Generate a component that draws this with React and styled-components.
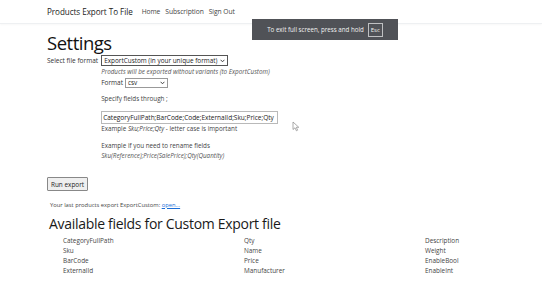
import React from "react";
import styled, { createGlobalStyle } from "styled-components";

const GlobalStyle = createGlobalStyle`
  html, body {
    margin: 0;
    padding: 0;
    background: #fff;
    font-family: "Open Sans", "Noto Sans", sans-serif;
    color: #212529;
  }
`;

const Page = styled.div`
  position: relative;
  width: 542px;
  height: 305px;
  overflow: hidden;
`;

const NavBar = styled.div`
  display: flex;
  align-items: center;
  height: 23px;
  padding-left: 47px;
  border-bottom: 1px solid #eef0f2;
  box-shadow: 0 1px 2px rgba(0, 0, 0, 0.03);
`;

const Brand = styled.span`
  font-size: 8.1px;
  letter-spacing: -0.05px;
  color: #222;
  margin-right: 9px;
`;

const NavLink = styled.span`
  font-size: 6.7px;
  letter-spacing: -0.05px;
  color: #444;
  margin-right: 5px;
`;

const Toast = styled.div`
  position: absolute;
  left: 252px;
  top: 19px;
  width: 146px;
  height: 21px;
  background: #505257;
  color: #f2f2f2;
  display: flex;
  align-items: center;
  justify-content: center;
  gap: 4px;
  font-size: 6.2px;
`;

const Key = styled.span`
  border: 1px solid #bfc0c2;
  padding: 2px 2px;
  font-size: 6px;
  line-height: 8px;
`;

const Main = styled.div`
  padding-left: 47px;
`;

const Title = styled.h1`
  margin: 7px 0 0;
  font-size: 18.5px;
  letter-spacing: -0.5px;
  font-weight: 400;
  line-height: 24px;
  color: #111;
`;

const Row = styled.div`
  display: flex;
  align-items: flex-start;
  gap: 3px;
`;

const Label = styled.span`
  font-size: 6.5px;
  color: #333;
  line-height: 11px;
  white-space: nowrap;
`;

const Column = styled.div`
  display: flex;
  flex-direction: column;
`;

const Select = styled.div`
  display: flex;
  align-items: center;
  justify-content: space-between;
  width: ${(p) => p.w}px;
  height: ${(p) => p.h || 10}px;
  box-sizing: border-box;
  border: 1px solid ${(p) => p.border || "#555"};
  padding: 0 2px 0 2px;
  font-size: 6.4px;
  white-space: nowrap;
  color: #222;
  background: #fff;
`;

const Hint = styled.div`
  font-size: 6.3px;
  line-height: 10px;
  white-space: nowrap;
  color: ${(p) => p.color || "#555"};
  font-style: ${(p) => (p.italic ? "italic" : "normal")};
  margin-top: ${(p) => p.mt || 0}px;
`;

const Inline = styled.div`
  display: flex;
  align-items: center;
  gap: 2px;
`;

const TextField = styled.div`
  width: 177px;
  height: 13px;
  box-sizing: border-box;
  border: 1px solid #b9b9b9;
  display: flex;
  align-items: center;
  padding: 0 1px;
  font-size: 6.5px;
  white-space: nowrap;
  color: #222;
  margin-top: 7px;
`;

const Button = styled.div`
  display: inline-flex;
  align-items: center;
  margin-top: 16px;
  height: 12px;
  padding: 0 3px;
  border: 1px solid #888;
  background: #efefef;
  font-size: 6.4px;
  color: #222;
  border-radius: 1px;
`;

const LastExport = styled.div`
  margin: 9px 0 0 3px;
  font-size: 5.8px;
  color: #444;

  a {
    color: #1a6ed8;
    text-decoration: underline;
  }
`;

const SubTitle = styled.h2`
  margin: 6px 0 0 2px;
  font-size: 14px;
  letter-spacing: -0.3px;
  font-weight: 400;
  line-height: 18px;
  color: #1a1a1a;
`;

const FieldGrid = styled.div`
  display: grid;
  grid-template-columns: 181px 181px 100px;
  margin: 3px 0 0 16px;
  font-size: 6.4px;
  line-height: 10px;
  color: #444;
`;

const Cursor = styled.svg`
  position: absolute;
  left: 292px;
  top: 121px;
`;

const Chevron = () => (
  <svg width="5" height="4" viewBox="0 0 5 4">
    <path d="M0.6 0.8 L2.5 2.8 L4.4 0.8" fill="none" stroke="#333" strokeWidth="0.9" />
  </svg>
);

const fields = [
  ["CategoryFullPath", "Qty", "Description"],
  ["Sku", "Name", "Weight"],
  ["BarCode", "Price", "EnableBool"],
  ["ExternalId", "Manufacturer", "EnableInt"],
];

export default function App() {
  return (
    <Page>
      <GlobalStyle />
      <NavBar>
        <Brand>Products Export To File</Brand>
        <NavLink>Home</NavLink>
        <NavLink>Subscription</NavLink>
        <NavLink>Sign Out</NavLink>
      </NavBar>
      <Toast>
        <span>To exit full screen, press and hold</span>
        <Key>Esc</Key>
      </Toast>
      <Main>
        <Title>Settings</Title>
        <Row>
          <Label>Select file format</Label>
          <Column>
            <Select w={127} h={11}>
              <span>ExportCustom (in your unique format)</span>
              <Chevron />
            </Select>
            <Hint italic mt={1}>Products will be exported without variants (to ExportCustom)</Hint>
            <Inline>
              <Label>Format</Label>
              <Select w={43} h={10} border="#999">
                <span>csv</span>
                <Chevron />
              </Select>
            </Inline>
            <Hint mt={6} color="#444">Specify fields through ;</Hint>
            <TextField>CategoryFullPath;BarCode;Code;ExternalId;Sku;Price;Qty</TextField>
            <Hint color="#444">
              Example <i>Sku;Price;Qty</i> - letter case is important
            </Hint>
            <Hint mt={7} color="#444">Example if you need to rename fields</Hint>
            <Hint italic>Sku(Reference);Price(SalePrice);Qty(Quantity)</Hint>
          </Column>
        </Row>
        <Button>Run export</Button>
        <LastExport>
          Your last products export ExportCustom: <a>open...</a>
        </LastExport>
        <SubTitle>Available fields for Custom Export file</SubTitle>
        <FieldGrid>
          {fields.flat().map((f) => (
            <span key={f}>{f}</span>
          ))}
        </FieldGrid>
      </Main>
      <Cursor width="8" height="11" viewBox="0 0 8 11">
        <path d="M1 1 L1 8.5 L3 6.8 L4.4 9.8 L5.6 9.2 L4.3 6.3 L6.8 6.3 Z" fill="#fff" stroke="#888" strokeWidth="0.7" />
      </Cursor>
    </Page>
  );
}
